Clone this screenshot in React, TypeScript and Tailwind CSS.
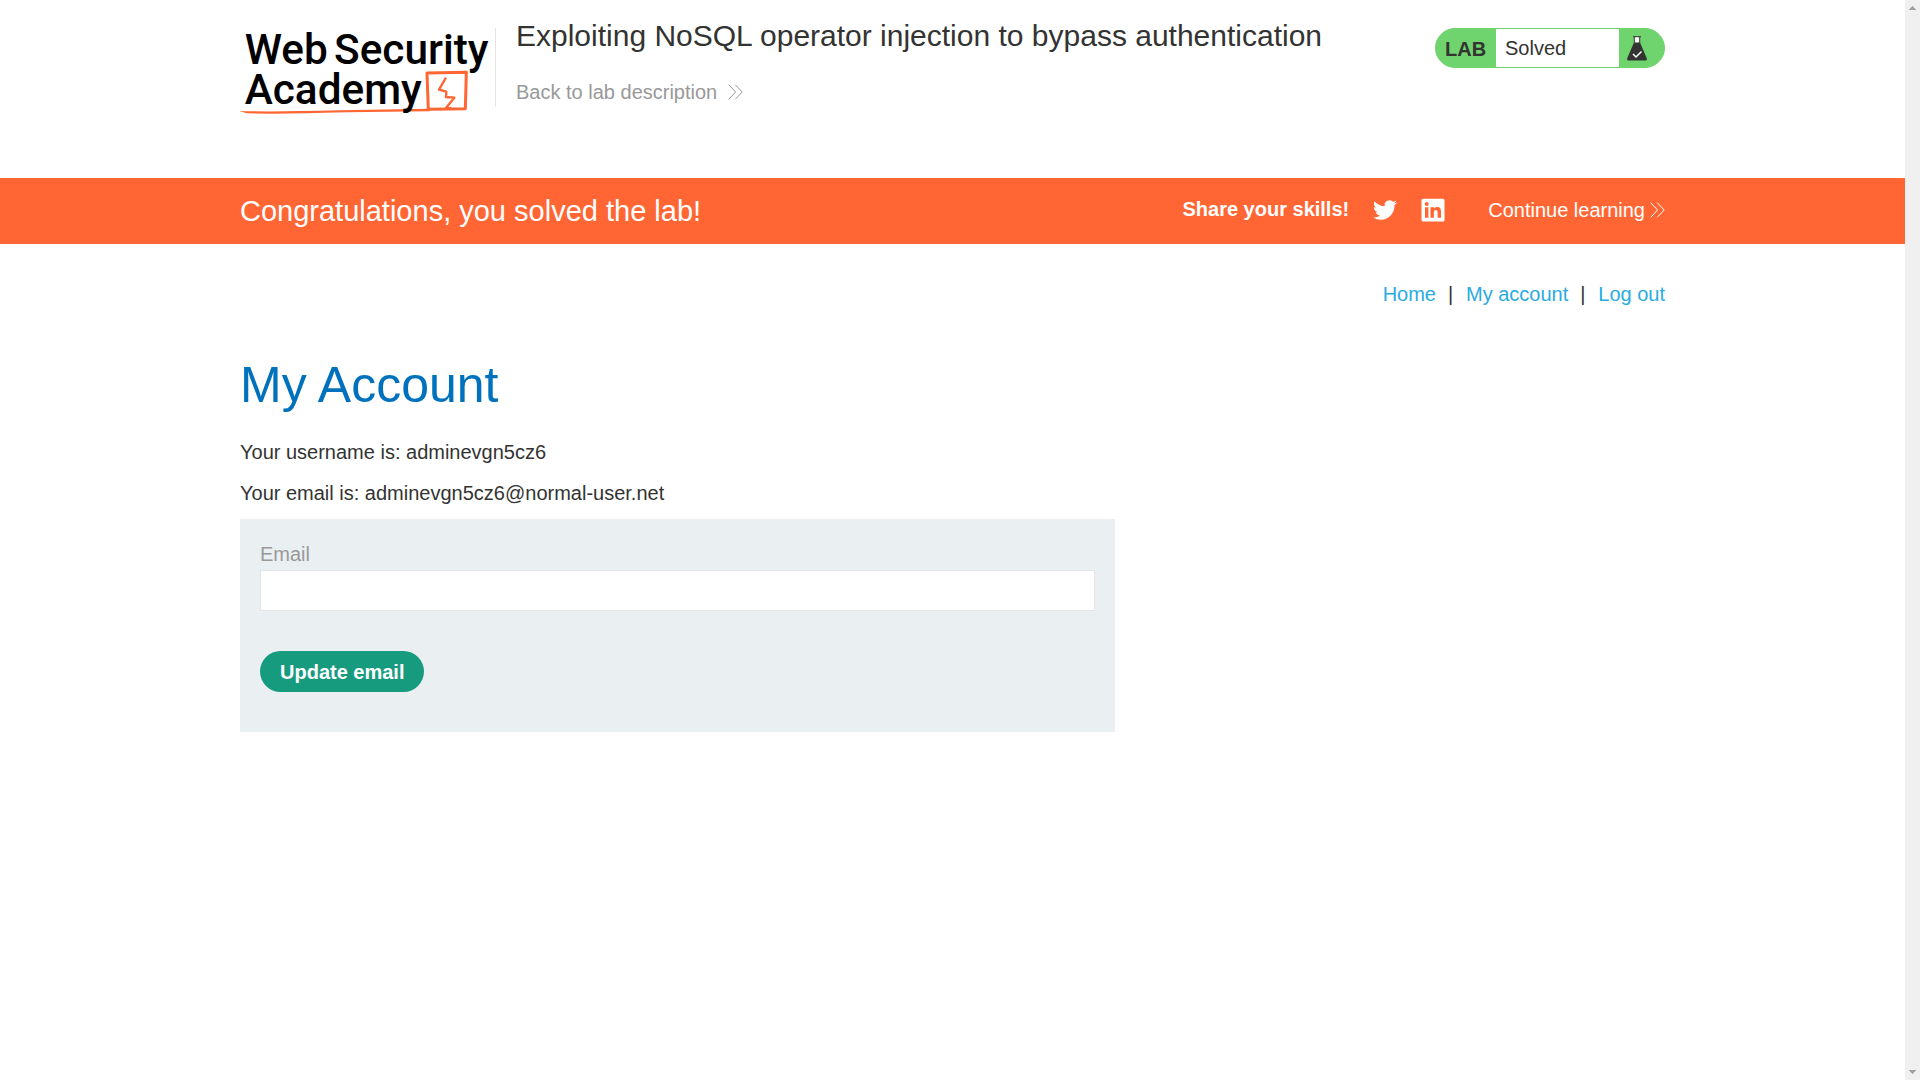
import React from "react";

function Chevrons({ className }: { className: string }) {
  return (
    <svg viewBox="0 0 15 16" className={className} fill="none" stroke="currentColor" aria-hidden="true">
      <path d="M0.7 0.7 7.6 8 0.7 15.3M7.3 0.7 14.2 8 7.3 15.3" />
    </svg>
  );
}

function Logo() {
  return (
    <svg
      viewBox="30 30 756 276"
      className="block h-[92px] w-[252px] overflow-visible"
      role="img"
      aria-label="Web Security Academy"
    >
      <path d="M28 288 Q130 291 330 286 L599 281 V289 L350 292 Q150 298 50 295Z" fill="#ff6633" />
      <g fill="none" stroke="#ff6633" strokeLinejoin="round">
        <path d="M595 286 591 174 709 172 706 281 596 283" strokeWidth="9" />
        <path d="M648 188 627 224 649 230 648 246 673 248 646 281 664 279" strokeWidth="7" />
      </g>
      <g fill="#000" fontFamily="Roboto, sans-serif" fontWeight="500" fontSize="127">
        <text x="44" y="147">Web</text>
        <text x="312" y="147">Security</text>
        <text x="44" y="268">Academy</text>
      </g>
    </svg>
  );
}

function Flask() {
  return (
    <svg viewBox="0 0 20 25" className="h-[25px] w-5" aria-hidden="true">
      <path d="M7 1h6v8H7z" fill="#fff" />
      <path d="M6 .7h8M7.3 1v6M12.7 1v6" stroke="#333332" strokeWidth="1" fill="none" />
      <path d="M7 6.5h6L19.7 22c.5 1.700-.2 2.500-1.700 2.500H2C.5 24.500-.2 23.700.3 22Z" fill="#333332" />
      <path d="m6 18 3 3 5.500-5.500" fill="none" stroke="#fff" strokeWidth="1.500" />
    </svg>
  );
}

function Scrollbar() {
  return (
    <div className="flex w-[15px] shrink-0 flex-col items-center justify-between bg-[#f0f0f0] py-1.5" aria-hidden="true">
      <svg viewBox="0 0 7 4" className="h-1 w-[7px]" fill="#a3a3a3">
        <path d="M3 0h1v1h1v1h1v1h1v1H0V3h1V2h1V1h1z" />
      </svg>
      <svg viewBox="0 0 7 4" className="h-1 w-[7px]" fill="#a3a3a3">
        <path d="M0 0h7v1H6v1H5v1H4v1H3V3H2V2H1V1H0z" />
      </svg>
    </div>
  );
}

export default function App() {
  return (
    <div className="flex min-h-screen bg-white font-['Liberation_Sans',Arial,sans-serif] text-xl text-[#333332]">
      <div className="min-w-0 flex-1">
        <header className="flex h-[178px] items-start px-60">
          <a href="#academy" className="mt-[25px]">
            <Logo />
          </a>
          <div className="mt-7 ml-[3px] h-[79px] w-px bg-[#e4e4e4]" />
          <div className="ml-5 pt-[18px]">
            <h1 className="text-[30px] leading-9">
              Exploiting NoSQL operator injection to bypass authentication
            </h1>
            <a href="#description" className="mt-6 flex items-center leading-7 text-[#999]">
              Back to lab description
              <Chevrons className="ml-[11px] h-4 w-[15px]" />
            </a>
          </div>
          <div className="mt-7 ml-auto flex h-10 w-[230px] items-stretch overflow-hidden rounded-full border border-[#6fd46e] bg-[#6fd46e]">
            <span className="flex w-[60px] items-center pt-0.5 pl-[9px] font-bold">LAB</span>
            <p className="flex flex-1 items-center bg-white pl-[9px]">Solved</p>
            <span className="flex w-[45px] items-center pl-2">
              <Flask />
            </span>
          </div>
        </header>

        <section className="flex h-[66px] items-center bg-[#ff6633] px-60 text-white">
          <h2 className="text-[29px]">Congratulations, you solved the lab!</h2>
          <div className="ml-auto flex items-center pb-0.5">
            <span className="pb-0.5 font-bold">Share your skills!</span>
            <a href="#twitter" aria-label="Share on Twitter" className="ml-6">
              <svg viewBox="0 0 24 24" className="h-6 w-6" fill="currentColor">
                <path d="M23.953 4.570a10 10 0 01-2.825.775 4.958 4.958 0 002.163-2.723c-.951.555-2.005.959-3.127 1.184a4.920 4.920 0 00-8.384 4.482C7.690 8.095 4.067 6.130 1.640 3.162a4.822 4.822 0 00-.666 2.475c0 1.710.870 3.213 2.188 4.096a4.904 4.904 0 01-2.228-.616v.060a4.923 4.923 0 003.946 4.827 4.996 4.996 0 01-2.212.085 4.936 4.936 0 004.604 3.417 9.867 9.867 0 01-6.102 2.105c-.390 0-.779-.023-1.170-.067a13.995 13.995 0 007.557 2.209c9.053 0 13.998-7.496 13.998-13.985 0-.210 0-.420-.015-.630A9.935 9.935 0 0024 4.590z" />
              </svg>
            </a>
            <a href="#linkedin" aria-label="Share on LinkedIn" className="ml-6">
              <svg viewBox="0 0 24 24" className="h-6 w-6" fill="currentColor">
                <path fillRule="evenodd" d="M2 .8h20a1.500 1.500 0 0 1 1.500 1.500v19.700a1.500 1.500 0 0 1-1.500 1.500H2A1.500 1.500 0 0 1 .5 22V2.300A1.500 1.500 0 0 1 2 .8ZM4 9.300v10.500h3.400V9.300ZM5.700 4.100a2 2 0 1 0 0 4 2 2 0 0 0 0-4ZM9.500 9.300v10.500h3.400v-5.200c0-1.400.3-2.700 2-2.700s1.700 1.600 1.700 2.800v5.100H20V14c0-2.800-.6-5-3.900-5-1.600 0-2.700.9-3.100 1.700V9.300Z" />
              </svg>
            </a>
            <a href="#learning" className="ml-[43px] flex items-center">
              Continue learning
              <Chevrons className="ml-[5px] h-4 w-[15px]" />
            </a>
          </div>
        </section>

        <main className="px-60">
          <nav className="flex justify-end gap-3 pt-9 leading-7 text-[#29abe2]">
            <a href="#home">Home</a>
            <span className="w-1.5 text-[#333332]">|</span>
            <a href="#account">My account</a>
            <span className="w-1.5 text-[#333332]">|</span>
            <a href="#logout">Log out</a>
          </nav>
          <h1 className="mt-12 text-[50px] leading-[58px] text-[#0071bc]">My Account</h1>
          <p className="mt-6 leading-7">Your username is: adminevgn5cz6</p>
          <p className="mt-[13px] leading-7">Your email is: adminevgn5cz6@normal-user.net</p>
          <form className="mt-3 max-w-[875px] bg-[#eaeff2] px-5 pt-5 pb-10" onSubmit={(e) => e.preventDefault()}>
            <label htmlFor="email" className="block leading-[31px] text-[#999]">Email</label>
            <input
              id="email"
              type="email"
              className="block h-[41px] w-full border border-[#e4e4e4] bg-white px-2 outline-none"
            />
            <button type="submit" className="mt-10 h-[41px] rounded-full bg-[#169b7f] px-5 font-bold text-white">
              Update email
            </button>
          </form>
        </main>
      </div>
      <Scrollbar />
    </div>
  );
}
